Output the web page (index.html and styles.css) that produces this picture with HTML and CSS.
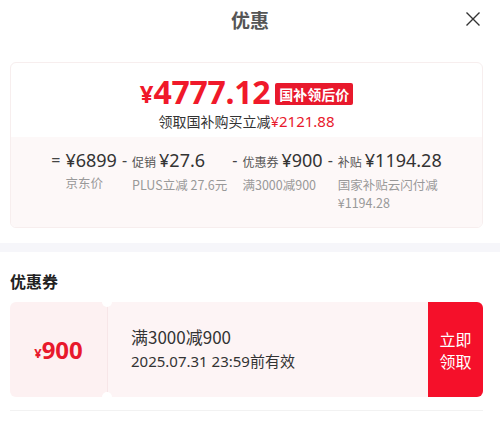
FILE: index.html
```html
<!DOCTYPE html>
<html lang="zh-CN">
<head>
    <meta charset="UTF-8">
    <meta name="viewport" content="width=device-width, initial-scale=1.0">
    <title>优惠</title>
    <link rel="stylesheet" href="styles.css">
</head>
<body>

<!-- Header -->
<header class="sheet-header">
    <h1>优惠</h1>
    <span class="close-btn">
        <svg width="16" height="16" viewBox="0 0 16 16"><path d="M1.5 1.5 L14.5 14.5 M14.5 1.5 L1.5 14.5" stroke="#333" stroke-width="1.4" fill="none"/></svg>
    </span>
</header>

<!-- Price summary -->
<section class="summary">
    <div class="summary-top">
        <div class="final-price">
            <span class="yen">¥</span><span class="amount">4777.12</span>
            <span class="badge">国补领后价</span>
        </div>
        <p class="save-line">领取国补购买立减<span class="red">¥2121.88</span></p>
    </div>
    <div class="summary-calc">
        <div class="calc-item">
            <span class="op">=</span>
            <div class="calc-col">
                <div class="calc-top"><span class="val">¥6899</span></div>
                <div class="calc-desc">京东价</div>
            </div>
        </div>
        <div class="calc-item">
            <span class="op">-</span>
            <div class="calc-col">
                <div class="calc-top"><span class="lbl">促销</span><span class="val">¥27.6</span></div>
                <div class="calc-desc">PLUS立减 27.6元</div>
            </div>
        </div>
        <div class="calc-item">
            <span class="op">-</span>
            <div class="calc-col">
                <div class="calc-top"><span class="lbl">优惠券</span><span class="val">¥900</span></div>
                <div class="calc-desc">满3000减900</div>
            </div>
        </div>
        <div class="calc-item">
            <span class="op">-</span>
            <div class="calc-col">
                <div class="calc-top"><span class="lbl">补贴</span><span class="val">¥1194.28</span></div>
                <div class="calc-desc">国家补贴云闪付减<br>¥1194.28</div>
            </div>
        </div>
    </div>
</section>

<div class="band"></div>

<!-- Coupons -->
<section class="coupons">
    <h2>优惠券</h2>
    <div class="coupon">
        <div class="coupon-stub">
            <span class="c-yen">¥</span><span class="c-amount">900</span>
        </div>
        <div class="coupon-body">
            <div class="c-title">满3000减900</div>
            <div class="c-date">2025.07.31 23:59前有效</div>
        </div>
        <div class="coupon-btn">立即<br>领取</div>
    </div>
    <div class="coupon-line"></div>
</section>

</body>
</html>
```

FILE: styles.css
```css
* {
    box-sizing: border-box;
}

body {
    margin: 0;
    font-family: "Noto Sans", "Noto Sans CJK SC", sans-serif;
    background-color: white;
    color: #333;
}

/* Header */
.sheet-header {
    height: 38px;
    display: flex;
    align-items: center;
    justify-content: center;
    position: relative;
}

.sheet-header h1 {
    margin: 0;
    font-size: 19px;
    font-weight: bold;
    color: #555;
    font-family: "Noto Sans CJK SC", sans-serif;
}

.close-btn {
    position: absolute;
    right: 19px;
    top: 11px;
    display: flex;
}

/* Summary card */
.summary {
    margin: 24px 17px 0 10px;
    border: 1px solid #f7eeee;
    border-radius: 6px;
    overflow: hidden;
}

.summary-top {
    padding: 12px 0 6px;
    text-align: center;
}

.final-price {
    display: flex;
    justify-content: center;
    align-items: center;
    color: #f0192a;
    height: 34px;
    line-height: 32px;
}

.final-price .yen {
    font-size: 24px;
    font-weight: bold;
    margin-top: 4px;
}

.final-price .amount {
    font-size: 32px;
    font-weight: bold;
    letter-spacing: -0.3px;
}

.badge {
    background-color: #e8192c;
    color: white;
    font-size: 14px;
    font-weight: bold;
    font-family: "Noto Sans CJK SC", sans-serif;
    padding: 1px 4px;
    border-radius: 2px;
    margin-left: 5px;
    margin-top: 3px;
    line-height: 20px;
}

.save-line {
    margin: 2px 0 0;
    font-size: 14px;
    line-height: 20px;
    color: #333;
    font-family: "Noto Sans CJK SC", sans-serif;
}

.red {
    color: #e8192c;
    font-family: "Noto Sans", sans-serif;
    font-size: 15px;
}

.summary-calc {
    background-color: #fdf8f8;
    display: flex;
    justify-content: center;
    padding: 11px 0 0 0;
    height: 90px;
    gap: 5px;
}

.calc-item {
    display: flex;
    align-items: flex-start;
}

.op {
    font-size: 16px;
    color: #444;
    margin-right: 5px;
    line-height: 24px;
}

.calc-top {
    display: flex;
    align-items: baseline;
    line-height: 24px;
    white-space: nowrap;
}

.calc-top .lbl {
    font-size: 12px;
    color: #555;
    margin-right: 3px;
    font-family: "Noto Sans CJK SC", sans-serif;
}

.calc-top .val {
    font-size: 18px;
    color: #333;
}

.calc-desc {
    font-size: 12.5px;
    color: #999;
    line-height: 18px;
    margin-top: 2px;
    white-space: nowrap;
    font-family: "Noto Sans CJK SC", sans-serif;
}

.band {
    height: 9px;
    background-color: #f6f6fa;
    margin-top: 15px;
}

/* Coupons */
.coupons {
    padding: 0 17px 0 10px;
}

.coupons h2 {
    margin: 0;
    padding: 17px 0 9px;
    font-size: 16px;
    font-weight: bold;
    color: #222;
    font-family: "Noto Sans CJK SC", sans-serif;
}

.coupon {
    display: flex;
    height: 95px;
    position: relative;
}

.coupon-stub {
    width: 97px;
    background-color: #fdf1f2;
    border-radius: 6px 0 0 6px;
    display: flex;
    align-items: center;
    justify-content: center;
    color: #e8192c;
    position: relative;
}

.coupon-stub::before,
.coupon-stub::after {
    content: "";
    position: absolute;
    right: -5px;
    width: 10px;
    height: 10px;
    border-radius: 50%;
    background-color: white;
    z-index: 1;
}

.coupon-stub::before {
    top: -5px;
}

.coupon-stub::after {
    bottom: -5px;
}

.c-yen {
    font-size: 13px;
    font-weight: bold;
    margin-top: 6px;
}

.c-amount {
    font-size: 24px;
    font-weight: bold;
}

.coupon-body {
    flex: 1;
    background-color: #fdf4f5;
    border-left: 1px solid #f7e6e8;
    padding: 23px 0 0 23px;
}

.c-title {
    font-size: 17px;
    color: #333;
    line-height: 24px;
    font-family: "Noto Sans CJK SC", sans-serif;
}

.c-date {
    font-size: 15px;
    color: #333;
    line-height: 22px;
    margin-top: 1px;
    font-family: "Noto Sans", "Noto Sans CJK SC", sans-serif;
}

.coupon-btn {
    width: 55px;
    background-color: #f5102a;
    color: white;
    border-radius: 0 6px 6px 0;
    display: flex;
    align-items: center;
    justify-content: center;
    text-align: center;
    font-size: 16px;
    line-height: 22px;
    font-family: "Noto Sans CJK SC", sans-serif;
}

.coupon-line {
    height: 1px;
    background-color: #f2f2f2;
    margin-top: 13px;
}
```
